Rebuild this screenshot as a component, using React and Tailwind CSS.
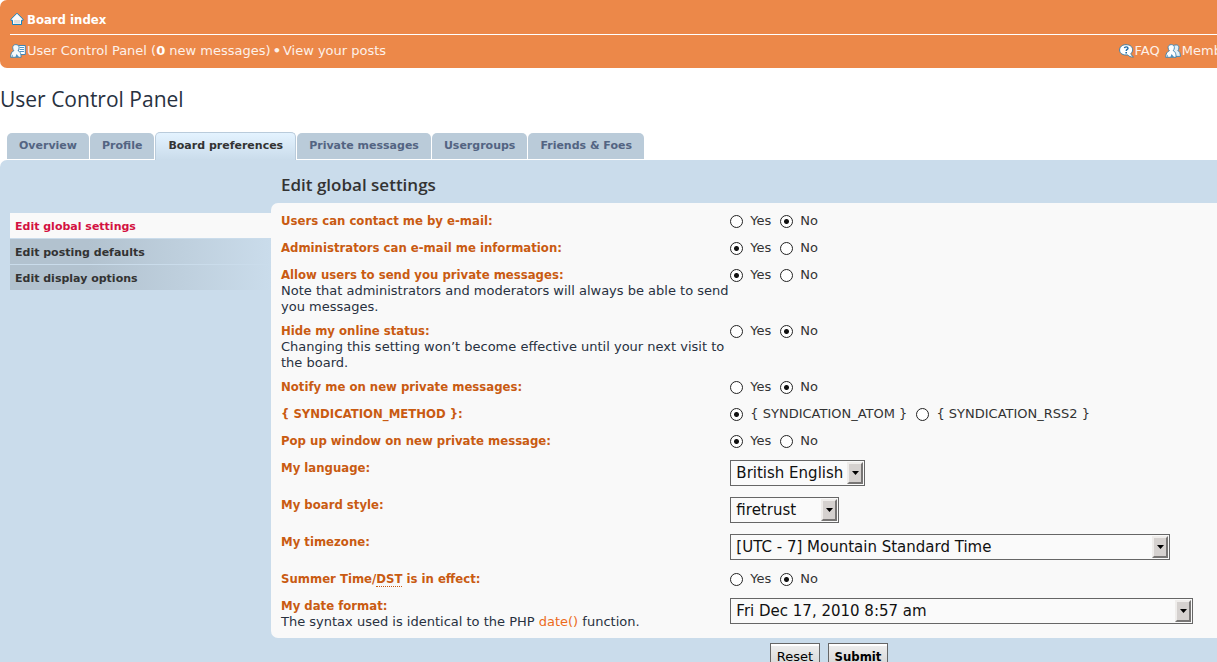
const HomeIcon = () => (
  <svg viewBox="0 0 14 14" className="size-[14px] shrink-0" aria-hidden="true">
    <path d="M7 1.2 L13 7.2 V8.3 H11.5 V12.5 H2.5 V8.3 H1 V7.2 Z" fill="#fbfbfb" stroke="#1583bf" strokeWidth="1" strokeLinejoin="round" />
    <path d="M4 8 H10 V11.6 H4 Z" fill="#dedede" />
  </svg>
);

const PanelIcon = () => (
  <svg viewBox="0 0 16 14" className="h-[14px] w-[16px] shrink-0" aria-hidden="true">
    <path d="M8.5 1.5 H15.3 V10.5 H8.5 Z" fill="#ffffff" stroke="#2f7fb8" strokeWidth="0.9" />
    <path d="M9.6 3.5 H14 M9.6 5.5 H14 M9.6 7.5 H14" stroke="#3f8abf" strokeWidth="0.9" />
    <path d="M5.9 0.6 C8 0.6 9.1 1.9 9.1 3.7 C9.1 5 8.6 6 8 6.7 C9.8 7.4 11 8.8 11.1 13.3 H0.6 C0.7 9.6 1.6 7.6 3.9 6.7 C3.1 5.9 2.7 4.9 2.7 3.7 C2.7 1.9 3.8 0.6 5.9 0.6 Z" fill="#f6f9fb" stroke="#3a80ad" strokeWidth="0.9" />
    <path d="M5.4 13 L6.6 10 L9 13 Z" fill="#4a90c2" />
    <path d="M1.4 12.8 L3 12.8 L2.6 10.4 Z" fill="#5c9cc8" />
  </svg>
);

const FaqIcon = () => (
  <svg viewBox="0 0 15 14" className="h-[14px] w-[15px] shrink-0" aria-hidden="true">
    <path d="M7 0.7 C11 0.7 13.6 2.7 13.6 5.8 C13.6 7.4 12.9 8.6 11.9 9.5 C12.1 10.8 13 11.9 14.4 12.9 C11.8 13.2 9.8 12.4 8.8 10.9 C4 11.4 0.6 9.6 0.6 6 C0.6 2.8 3.2 0.7 7 0.7 Z" fill="#ffffff" stroke="#2f7aa8" strokeWidth="0.9" />
    <path d="M5.4 4.2 C5.6 2.4 9 2.4 9 4.2 C9 5.5 7.2 5.4 7.2 7" fill="none" stroke="#1d6aa6" strokeWidth="1.4" />
    <path d="M6.4 8 H8 V9.4 H6.4 Z" fill="#1d6aa6" />
  </svg>
);

const MembersIcon = () => (
  <svg viewBox="0 0 16 14" className="h-[14px] w-[16px] shrink-0" aria-hidden="true">
    <path d="M11.2 0.9 C13.2 0.9 14 2.2 13.9 3.9 C13.8 5.2 13.3 6 12.8 6.6 C14.6 7.4 15.3 8.8 15.4 12.4 H8 V1.9 C9 1.2 10 0.9 11.2 0.9 Z" fill="#e3eef5" stroke="#3586b8" strokeWidth="0.9" />
    <path d="M6.3 0.6 C8.4 0.6 9.4 1.9 9.4 3.7 C9.4 5 8.8 6 8.2 6.7 C9.9 7.4 11 8.8 11.1 13.3 H0.7 C0.8 9.6 2.1 7.6 4.4 6.7 C3.6 5.9 3.1 4.9 3.1 3.7 C3.1 1.9 4.2 0.6 6.3 0.6 Z" fill="#fcfdfe" stroke="#3a80ad" strokeWidth="0.9" />
    <path d="M5.4 13 L6.6 10 L9 13 Z" fill="#4a90c2" />
    <path d="M1.5 12.8 L3.2 12.8 L2.8 10.4 Z" fill="#5c9cc8" />
  </svg>
);

const Row = ({ label, note, labelFor, tall, children }) => (
  <div
    role={labelFor ? undefined : "group"}
    className={`grid grid-cols-[41%_1fr] ${tall ? "min-h-[29px]" : "min-h-[19px]"}`}
  >
    <div>
      <label htmlFor={labelFor} className="block font-['DejaVu_Sans_Condensed','DejaVu_Sans',sans-serif] text-[13px] leading-4 font-bold text-[#c95b12]">
        {label}
      </label>
      {note && <p className="text-[13px] leading-4 text-[#28313f]">{note}</p>}
    </div>
    <div>{children}</div>
  </div>
);

const Radios = ({ name, options = ["Yes", "No"], value }) => (
  <div className="flex gap-[9px]">
    {options.map((o) => (
      <label key={o} className="flex items-center gap-[7px] text-[13px] leading-4 text-[#333333]">
        <input
          type="radio"
          name={name}
          defaultChecked={o === value}
          className="size-[13px] appearance-none rounded-full border border-[#222222] bg-white checked:bg-[radial-gradient(circle,#111111_2px,#ffffff_3px)]"
        />
        {o}
      </label>
    ))}
  </div>
);

const Select = ({ id, option, width }) => (
  <div className={`relative ${width}`}>
    <select id={id} className="block h-[26px] w-full appearance-none border border-[#666666] bg-[#fafafa] pr-[18px] pl-[5px] text-[15px] text-[#111111]">
      <option>{option}</option>
    </select>
    <span className="pointer-events-none absolute inset-y-[2px] right-[2px] flex w-4 items-center justify-center border-t-2 border-r-2 border-b-2 border-l-2 border-t-[#efedeb] border-r-[#777574] border-b-[#777574] border-l-[#efedeb] bg-[#d5d1cf]">
      <svg viewBox="0 0 7 4" className="h-1 w-[7px]" aria-hidden="true">
        <path d="M0 0 H7 L3.5 4 Z" fill="#000000" />
      </svg>
    </span>
  </div>
);

const tabs = ["Overview", "Profile", "Board preferences", "Private messages", "Usergroups", "Friends & Foes"];
const sections = ["Edit global settings", "Edit posting defaults", "Edit display options"];

export default function App() {
  return (
    <div className="flex min-h-screen flex-col overflow-x-clip bg-white font-['DejaVu_Sans',Verdana,sans-serif]">
      <div className="flex w-[calc(100%+170px)] grow flex-col">
        <header className="rounded-[7px] bg-[#ec8849] px-[10px] text-[13px] text-white">
          <div className="flex h-[34px] items-end pb-[5px]">
            <a href="#index" className="flex items-center gap-[3px] font-['DejaVu_Sans_Condensed','DejaVu_Sans',sans-serif] font-bold">
              <HomeIcon />
              Board index
            </a>
          </div>
          <nav className="flex h-[34px] items-center justify-between border-t border-white pb-[2px] text-[#fdf1e9]">
            <div className="flex items-center">
              <a href="#ucp" className="flex items-center gap-px">
                <PanelIcon />
                <span>User Control Panel (<strong className="text-white">0</strong> new messages)</span>
              </a>
              <span className="px-[2px] font-bold">•</span>
              <a href="#posts">View your posts</a>
            </div>
            <div className="flex items-center gap-[5px] pr-[135px]">
              <a href="#faq" className="flex items-center gap-px"><FaqIcon />FAQ</a>
              <a href="#members" className="flex items-center gap-px"><MembersIcon />Members</a>
            </div>
          </nav>
        </header>

        <h2 className="pt-[15px] font-['Open_Sans',sans-serif] text-[21px] leading-8 text-[#28313f]">User Control Panel</h2>

        <nav className="mt-[17px] flex items-end gap-px pl-[7px] text-[11px] font-bold">
          {tabs.map((t) =>
            t === "Board preferences" ? (
              <a key={t} href="#tab" aria-current="page" className="flex h-7 items-center rounded-t-[5px] border-x border-t border-[#b9cbdb] bg-linear-to-b from-[#e4f3ff] to-[#cadceb] px-3 text-[#333333]">{t}</a>
            ) : (
              <a key={t} href="#tab" className="mb-px flex h-[26px] items-center rounded-t-[5px] bg-[#bacbd9] px-3 text-[#536482]">{t}</a>
            )
          )}
        </nav>

        <main className="flex grow rounded-tl-[7px] bg-[#cadceb]">
          <nav className="flex w-[271px] shrink-0 flex-col gap-px pt-[53px] pl-[10px] text-[11px] font-bold">
            {sections.map((s, i) => (
              <a
                key={s}
                href="#section"
                className={`flex h-[25px] items-center pt-[3px] pl-[5px] ${i === 0 ? "bg-[#f9f9f9] text-[#d31141]" : "bg-linear-to-r from-[#b2c2cf] from-30% to-[#cadceb] text-[#333333]"}`}
              >
                {s}
              </a>
            ))}
          </nav>

          <form className="grow" onSubmit={(e) => e.preventDefault()}>
            <h3 className="flex h-[43px] items-center pt-[6px] pl-[10px] font-['Open_Sans',sans-serif] text-[17px] font-semibold text-[#333333]">Edit global settings</h3>
            <div className="flex flex-col gap-2 rounded-[7px] bg-[#f9f9f9] px-[10px] pt-[10px] pb-2">
              <Row label="Users can contact me by e-mail:"><Radios name="email" value="No" /></Row>
              <Row label="Administrators can e-mail me information:"><Radios name="admin" value="Yes" /></Row>
              <Row label="Allow users to send you private messages:" note="Note that administrators and moderators will always be able to send you messages."><Radios name="pm" value="Yes" /></Row>
              <Row label="Hide my online status:" note="Changing this setting won’t become effective until your next visit to the board."><Radios name="hide" value="No" /></Row>
              <Row label="Notify me on new private messages:"><Radios name="notify" value="No" /></Row>
              <Row label="{ SYNDICATION_METHOD }:"><Radios name="feed" options={["{ SYNDICATION_ATOM }", "{ SYNDICATION_RSS2 }"]} value="{ SYNDICATION_ATOM }" /></Row>
              <Row label="Pop up window on new private message:"><Radios name="popup" value="Yes" /></Row>
              <Row label="My language:" labelFor="lang" tall><Select id="lang" option="British English" width="w-[135px]" /></Row>
              <Row label="My board style:" labelFor="style" tall><Select id="style" option="firetrust" width="w-[109px]" /></Row>
              <Row label="My timezone:" labelFor="tz" tall><Select id="tz" option="[UTC - 7] Mountain Standard Time" width="w-[440px]" /></Row>
              <Row label={<>Summer Time/<abbr title="Daylight Saving Time" className="border-b border-dotted border-b-[#c95b12] [text-decoration:none]">DST</abbr> is in effect:</>}><Radios name="dst" value="No" /></Row>
              <Row label="My date format:" labelFor="date" note={<>The syntax used is identical to the PHP <a href="#date" className="text-[#ec6b1c]">date()</a> function.</>}><Select id="date" option="Fri Dec 17, 2010 8:57 am" width="w-[463px]" /></Row>
            </div>
            <div className="flex justify-center gap-2 pt-[5px] pb-4 text-[13px] text-black">
              <button type="reset" className="h-7 w-[50px] border border-[#666666] bg-linear-to-b from-[#efefef] to-[#d2d2d2] shadow-[inset_0_2px_0_#ffffff]">Reset</button>
              <button type="submit" className="h-7 w-[60px] border border-[#666666] bg-linear-to-b from-[#efefef] to-[#d2d2d2] font-['DejaVu_Sans_Condensed','DejaVu_Sans',sans-serif] font-bold shadow-[inset_0_2px_0_#ffffff]">Submit</button>
            </div>
          </form>
        </main>
      </div>
    </div>
  );
}
